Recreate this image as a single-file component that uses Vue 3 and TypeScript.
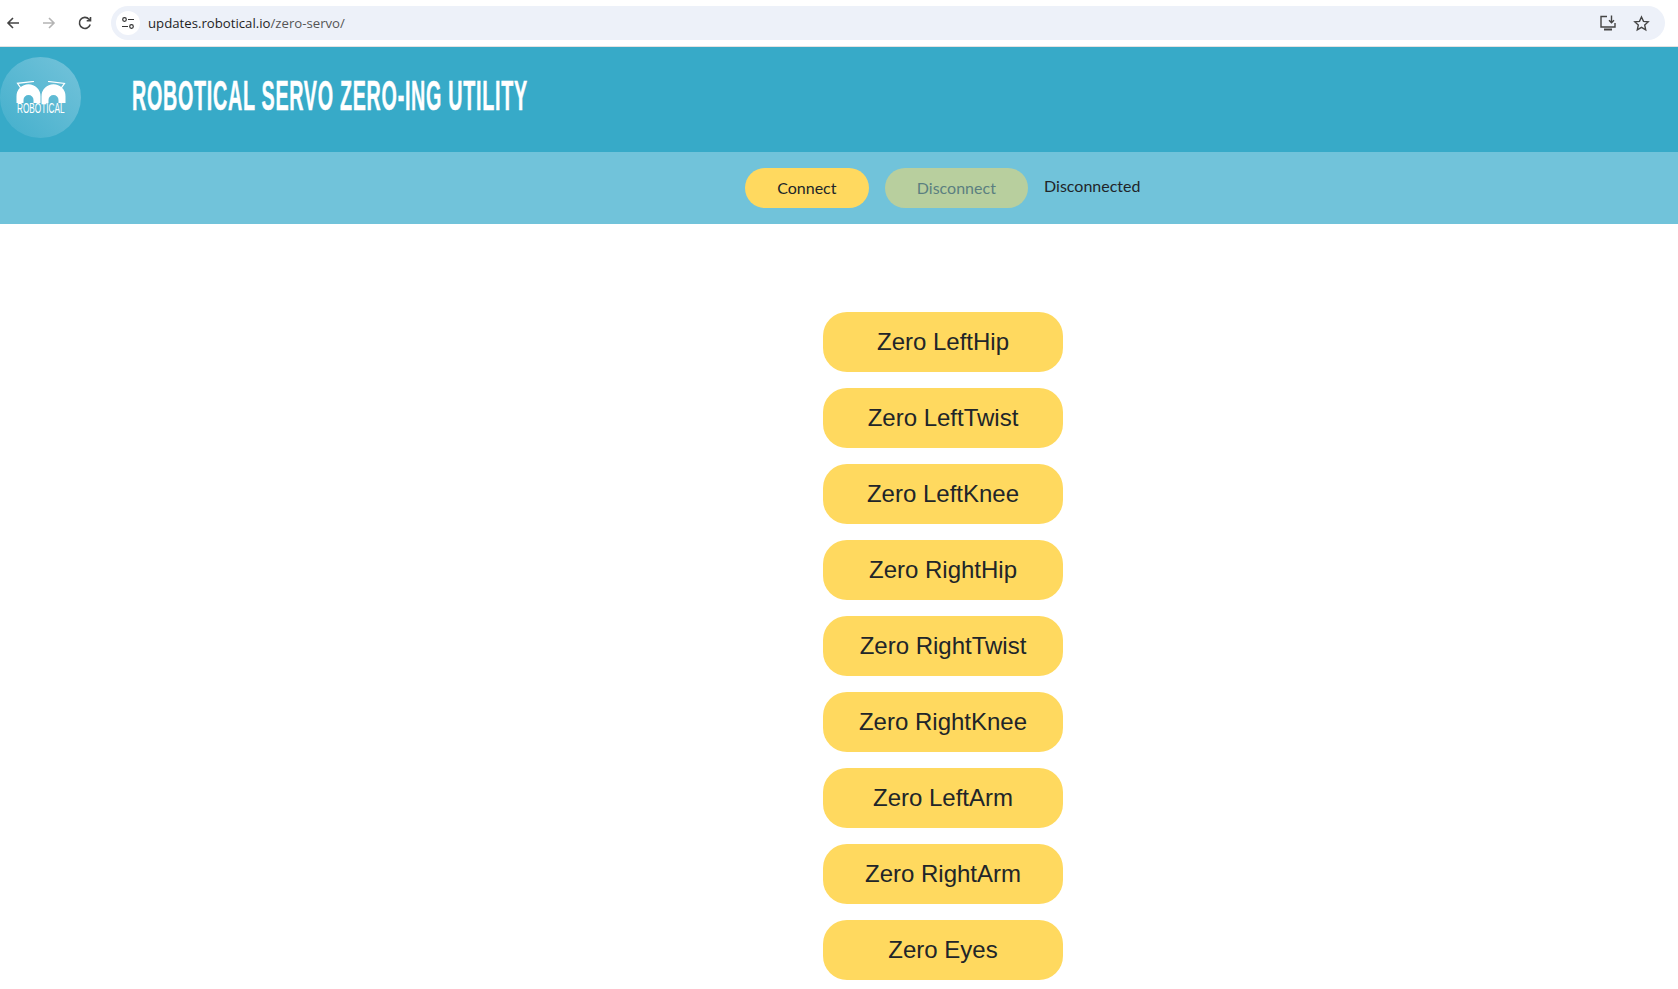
<script setup lang="ts">
const servos: string[] = [
  'Zero LeftHip', 'Zero LeftTwist', 'Zero LeftKnee', 'Zero RightHip', 'Zero RightTwist',
  'Zero RightKnee', 'Zero LeftArm', 'Zero RightArm', 'Zero Eyes',
]
</script>

<template>
  <div class="page">
    <div class="chrome">
      <svg class="nav" width="16" height="16" viewBox="0 0 16 16"><path d="M14 8H3M8 3 3 8l5 5" fill="none" stroke="#444" stroke-width="1.6"/></svg>
      <svg class="nav fwd" width="16" height="16" viewBox="0 0 16 16"><path d="M2 8h11M8 3l5 5-5 5" fill="none" stroke="#b4b4b4" stroke-width="1.6"/></svg>
      <svg class="nav rel" width="16" height="16" viewBox="0 0 16 16"><path d="M13.2 9.5A5.5 5.5 0 1 1 12 4.2L13.5 5.8M13.5 2v3.8H9.7" fill="none" stroke="#444" stroke-width="1.6"/></svg>
      <div class="omnibox">
        <span class="tune">
          <svg width="14" height="14" viewBox="0 0 14 14" fill="none" stroke="#333" stroke-width="1.2"><circle cx="3.5" cy="3.5" r="1.8"/><path d="M7 3.5h6M1 10.5h6"/><circle cx="10.500" cy="10.500" r="1.8"/></svg>
        </span>
        <span class="url">updates.robotical.io<span class="path">/zero-servo/</span></span>
        <svg class="install" width="18" height="18" viewBox="0 0 18 18" fill="none" stroke="#444" stroke-width="1.4"><path d="M8 2.500H2v10.500h14V9"/><path d="M5 15.500h8" stroke-width="2"/><path d="M12.500 1.500v7M10 6.200l2.500 2.500L15 6.200"/></svg>
        <svg class="star" width="17" height="17" viewBox="0 0 17 17" fill="none" stroke="#444" stroke-width="1.4"><path d="M8.500 2l2 4.400 4.700.5-3.500 3.200 1 4.700-4.200-2.400-4.200 2.400 1-4.700L1.800 6.900l4.700-.5z"/></svg>
      </div>
    </div>

    <header class="banner">
      <div class="logo">
        <svg width="50" height="22" viewBox="0 0 50 22">
          <path d="M18 .4 1.500 2.300l4.200 6M32 .4l16.500 2-4.200 6" fill="none" stroke="#fff" stroke-width="1.2"/>
          <path d="M.5 22V15.300a12 12 0 0 1 24 0V22H17.500V19a5 5 0 0 0-10 0v3zM25.500 22V15.300a12 12 0 0 1 24 0V22H42.500V19a5 5 0 0 0-10 0v3z" fill="#fff"/>
        </svg>
        <span class="logo-text">ROBOTICAL</span>
      </div>
      <h1 class="title">ROBOTICAL SERVO ZERO-ING UTILITY</h1>
    </header>

    <div class="connbar">
      <button class="pill">Connect</button>
      <button class="pill off">Disconnect</button>
      <span class="status">Disconnected</span>
    </div>

    <main class="list">
      <button v-for="s in servos" :key="s" class="zero">{{ s }}</button>
    </main>
  </div>
</template>

<style>
html, body { margin: 0; overflow: hidden; background: #fff; }
</style>

<style scoped>
.page { width: 1678px; height: 989px; overflow: hidden; font-family: Lato, sans-serif; color: #212529; }
.chrome {
  height: 46px; display: flex; align-items: center; padding: 0 13px 0 5px;
  border-bottom: 1px solid #e2e2e2; background: #fff;
}
.nav { flex: none; margin-right: 20px; }
.rel { margin-right: 18px; }
.omnibox {
  flex: 1; height: 34px; border-radius: 17px; background: #edf1f9; display: flex; align-items: center;
  padding: 0 15px 0 5px;
}
.tune { width: 24px; height: 24px; border-radius: 50%; background: #fff; display: flex; align-items: center; justify-content: center; }
.url { font: 13.2px "Open Sans", sans-serif; color: #1f1f1f; margin-left: 8px; flex: 1; }
.path { color: #555; }
.install { margin-right: 16px; }
.banner { height: 105px; background: #37aac8; display: flex; align-items: center; }
.logo {
  width: 81px; height: 81px; margin-top: -5px; border-radius: 50%; flex: none; box-sizing: border-box; padding-top: 24px;
  background: linear-gradient(45deg, #43afcc, #74c3da);
  display: flex; flex-direction: column; align-items: center;
}
.logo-text { font: 15.5px/14px "Liberation Sans", sans-serif; color: #fff; transform: scaleX(.53); margin-top: -2px; white-space: nowrap; }
.title {
  margin: -8px 0 0 51px; font: 700 42px/1 "Liberation Sans", sans-serif; color: #fff; white-space: nowrap;
  letter-spacing: 1.5px; -webkit-text-stroke: .5px #fff;
  transform: scaleX(.47); transform-origin: left center;
}
.connbar {
  height: 72px; background: #71c3da; display: flex; align-items: center; gap: 16px; padding-left: 745px;
}
.pill {
  height: 40px; padding: 0 32.2px 2px; border: 0; border-radius: 20px; background: #ffd95f;
  font: 16px Lato, sans-serif; color: #212529;
}
.off { background: #b8cf9e; color: #5b7f80; }
.status { font-size: 16px; margin-top: -5px; }
.list { display: flex; flex-direction: column; align-items: center; gap: 16px; padding: 88px 0 0 208px; }
.zero {
  width: 240px; height: 60px; border: 0; border-radius: 24px; background: #ffd95f; flex: none;
  font: 24px "Liberation Sans", sans-serif; color: #212529;
}
</style>
